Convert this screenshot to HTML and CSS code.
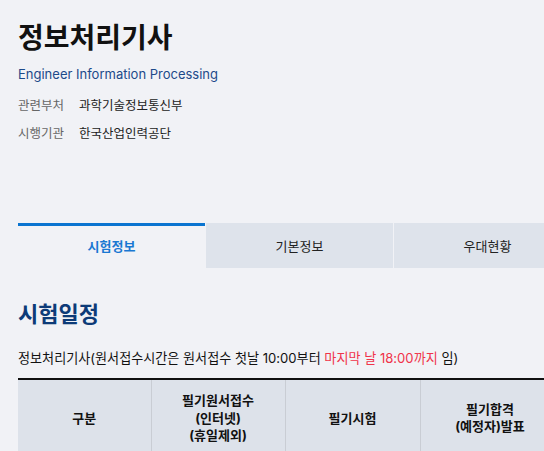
FILE: index.html
```html
<!DOCTYPE html>
<html lang="ko">
<head>
<meta charset="utf-8">
<title>정보처리기사</title>
<link rel="stylesheet" href="styles.css">
</head>
<body>
<div class="page">
  <header class="header">
    <h1 class="title">정보처리기사</h1>
    <p class="subtitle">Engineer Information Processing</p>
    <dl class="info">
      <div class="info-row"><dt>관련부처</dt><dd>과학기술정보통신부</dd></div>
      <div class="info-row"><dt>시행기관</dt><dd>한국산업인력공단</dd></div>
    </dl>
  </header>

  <nav class="tabs">
    <div class="tab active">시험정보</div>
    <div class="tab">기본정보</div>
    <div class="tab">우대현황</div>
  </nav>

  <section class="schedule">
    <h2 class="section-title">시험일정</h2>
    <p class="notice">정보처리기사(원서접수시간은 원서접수 첫날 10:00부터 <span class="red">마지막 날 18:00까지</span> 임)</p>
    <table class="table">
      <colgroup>
        <col class="c1"><col class="c2"><col class="c3"><col class="c4">
      </colgroup>
      <thead>
        <tr>
          <th>구분</th>
          <th>필기원서접수<br>(인터넷)<br>(휴일제외)</th>
          <th>필기시험</th>
          <th>필기합격<br>(예정자)발표</th>
        </tr>
      </thead>
    </table>
  </section>
</div>
</body>
</html>
```
FILE: styles.css
```css
html, body {
  margin: 0;
  padding: 0;
  background: #f1f2f6;
  overflow: hidden;
}
body {
  font-family: Inter, "Noto Sans CJK KR", sans-serif;
  color: #111;
}
.page {
  padding: 18px 0 0 18px;
}
.title {
  margin: 0;
  font-size: 28px;
  line-height: 40px;
  font-weight: 700;
  color: #111;
}
.subtitle {
  margin: 6px 0 0;
  font-size: 13px;
  line-height: 20px;
  color: #1d4a8a;
}
.info {
  margin: 12px 0 0;
  display: flex;
  flex-direction: column;
  gap: 8px;
}
.info-row {
  display: flex;
  font-size: 12.5px;
  line-height: 20px;
}
.info-row dt {
  width: 61px;
  color: #666;
}
.info-row dd {
  margin: 0;
  color: #222;
}
.tabs {
  margin-top: 79px;
  display: flex;
  gap: 1px;
  width: 800px;
}
.tab {
  flex: 0 0 187px;
  height: 45px;
  box-sizing: border-box;
  display: flex;
  align-items: center;
  justify-content: center;
  font-size: 13px;
  color: #222;
  background: #dee3eb;
}
.tab.active {
  background: #f1f2f6;
  border-top: 3px solid #0a74d0;
  color: #1a78d2;
  font-weight: 700;
  padding-bottom: 3px;
}
.section-title {
  margin: 31px 0 0;
  font-size: 22px;
  line-height: 30px;
  font-weight: 700;
  color: #0d3b78;
}
.notice {
  margin: 19px 0 0;
  font-size: 13.1px;
  line-height: 20px;
  color: #111;
}
.red {
  color: #f0334a;
}
.table {
  margin-top: 10px;
  border-collapse: collapse;
  table-layout: fixed;
  width: 542px;
  border-top: 2px solid #111;
}
.c1 { width: 133px; }
.c2 { width: 134px; }
.c3 { width: 135px; }
.c4 { width: 140px; }
.table th {
  background: #dde2ea;
  border-right: 1px solid #c9cdd4;
  font-size: 13px;
  line-height: 17.5px;
  font-weight: 700;
  color: #111;
  padding: 12px 4px;
  text-align: center;
  vertical-align: middle;
}
```
